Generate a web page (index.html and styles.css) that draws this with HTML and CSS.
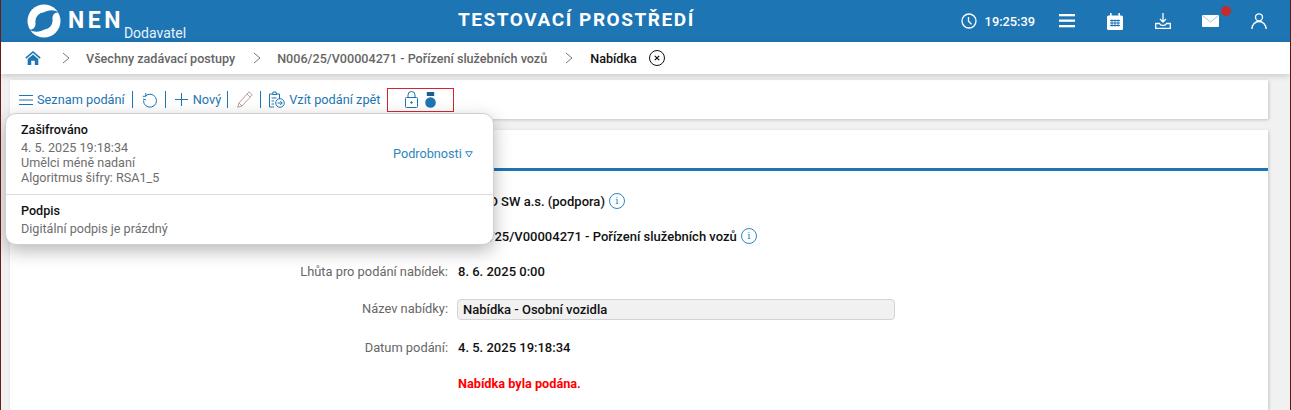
FILE: index.html
```html
<!DOCTYPE html>
<html lang="cs">
<head>
<meta charset="utf-8">
<title>NEN</title>
<link rel="stylesheet" href="styles.css">
</head>
<body>
<div class="frame">
  <header class="topbar">
    <div class="brand">
      <svg class="logo" width="34" height="34" viewBox="0 0 34 34"><circle cx="17" cy="17" r="16.500" fill="#fff"/><circle cx="17" cy="17" r="8.500" fill="#1d75b3"/><path fill="#1d75b3" d="M16 9C21 6 26 5 32 8.500 27 8 25 11 25.500 17Z"/><path fill="#1d75b3" d="M18 25C13 28 8 29 2 25.500 7 26 9 23 8.500 17Z"/></svg>
      <span class="brand-name">NEN</span>
      <span class="brand-role">Dodavatel</span>
    </div>
    <div class="env-title">TESTOVACÍ PROSTŘEDÍ</div>
    <div class="top-tools">
      <span class="clock">
        <svg width="16" height="16" viewBox="0 0 16 16" fill="none" stroke="#fff" stroke-width="1.300"><circle cx="8" cy="8" r="7"/><path d="M7.500 4v4.200l3 3"/></svg>
        <span>19:25:39</span>
      </span>
      <svg class="tool tool-menu" width="16" height="14" viewBox="0 0 16 14" fill="#fff"><rect y="0" width="16" height="2.300"/><rect y="5.500" width="16" height="2.300"/><rect y="11" width="16" height="2.300"/></svg>
      <svg class="tool tool-cal" width="16" height="17" viewBox="0 0 16 17"><rect y="2.500" width="16" height="14.500" rx="1.500" fill="#fff"/><rect x="3" y="0" width="1.600" height="4" fill="#fff"/><rect x="11.400" y="0" width="1.600" height="4" fill="#fff"/><path d="M3 7.500h10M3 10h10M3 12.500h10M5 6.500v7M8 6.500v7M11 6.500v7" stroke="#1d75b3" fill="none"/></svg>
      <svg class="tool tool-dl" width="16" height="16" viewBox="0 0 16 16" fill="none" stroke="#fff" stroke-width="1.300"><path d="M8 0v8.500M5 6l3 3 3-3M.7 10.500h3.800c.5 1.500 1.500 2 3.500 2s3-.5 3.500-2h3.800v4.800H.7Z"/></svg>
      <span class="mail">
        <svg width="17" height="12" viewBox="0 0 17 12"><rect width="17" height="12" rx="1" fill="#fff"/><path d="M.5.500 8.500 7l8-6.500" stroke="#9cc4df" fill="none"/></svg>
        <i class="dot"></i>
      </span>
      <svg class="tool tool-user" width="16" height="16" viewBox="0 0 16 16" fill="none" stroke="#fff" stroke-width="1.300"><circle cx="8" cy="4.300" r="3.500"/><path d="M.8 16c.2-4 3-7.500 7.200-7.500s7 3.500 7.200 7.500"/></svg>
    </div>
  </header>

  <nav class="crumbs">
    <svg class="home" width="16" height="16" viewBox="0 0 18 16"><path fill="#1d75b3" d="M9 0 .3 7.500l1.200 1.300L9 2.400l7.500 6.400 1.200-1.300Z"/><path fill="#1d75b3" d="M9 4 3 9v7h4v-5h4v5h4V9Z"/></svg>
    <svg class="chev" width="8" height="12" viewBox="0 0 8 12" fill="none" stroke="#777"><path d="m1 1 6 5-6 5"/></svg>
    <span class="crumb">Všechny zadávací postupy</span>
    <svg class="chev" width="8" height="12" viewBox="0 0 8 12" fill="none" stroke="#777"><path d="m1 1 6 5-6 5"/></svg>
    <span class="crumb">N006/25/V00004271 - Pořízení služebních vozů</span>
    <svg class="chev" width="8" height="12" viewBox="0 0 8 12" fill="none" stroke="#777"><path d="m1 1 6 5-6 5"/></svg>
    <span class="crumb crumb-current">Nabídka</span>
    <svg class="close" width="16" height="16" viewBox="0 0 16 16" fill="none" stroke="#111"><circle cx="8" cy="8" r="7.500"/><path d="m5.800 5.800 4.400 4.400m0-4.400-4.400 4.400" stroke-width="1.200"/></svg>
  </nav>

  <main class="content">
    <section class="toolbar">
      <button class="tb-item">
        <svg width="14" height="10" viewBox="0 0 14 10" stroke="#1d75b3" fill="none"><path d="M0 .5h14M0 5h14M0 9.500h14"/></svg>
        <span>Seznam podání</span>
      </button>
      <i class="sep"></i>
      <button class="tb-item">
        <svg width="16" height="16" viewBox="0 0 16 16" stroke="#1d75b3" fill="none"><path d="M3.500 4A6.500 6.500 0 1 1 1.500 8.500"/><path d="M3.800 1v3.300H.8M1 7l3 1"/></svg>
      </button>
      <i class="sep"></i>
      <button class="tb-item tb-new">
        <svg width="13" height="13" viewBox="0 0 13 13" stroke="#1d75b3" fill="none"><path d="M6.500 0v13M0 6.500h13"/></svg>
        <span>Nový</span>
      </button>
      <i class="sep"></i>
      <button class="tb-item">
        <svg width="16" height="17" viewBox="0 0 16 17" stroke="#b9a196" fill="none"><path d="m12 .8 3.200 3.200L5 15l-4.300 1.300L2 12ZM10 3l3.200 3.200M2 12l3 3"/></svg>
      </button>
      <i class="sep"></i>
      <button class="tb-item tb-back">
        <svg width="17" height="17" viewBox="0 0 17 17" stroke="#1d75b3" fill="none"><path d="M6 16H1.500V3h3M8 3h3.500v5M4.500 3.500 5 1h3l.5 2.500ZM3.500 7h5M3.500 10H6M3.500 13H6"/><circle cx="12" cy="12" r="4.300"/><path d="M9.500 12h4.500M12.300 10l2 2-2 2"/></svg>
        <span>Vzít podání zpět</span>
      </button>
      <div class="seal-box">
        <svg width="13" height="17" viewBox="0 0 13 17" stroke="#1d75b3" fill="none"><rect x=".5" y="6.500" width="12" height="10" rx="1"/><path d="M3 6.500V4a3.500 3.500 0 0 1 7 0v2.500"/><circle cx="6.500" cy="11.500" r=".8" fill="#1d75b3"/></svg>
        <svg width="11" height="16" viewBox="0 0 11 16" fill="#1d75b3"><rect x="1.800" width="7.400" height="4" fill="#1a5f8f"/><circle cx="5.500" cy="10.500" r="5.300"/></svg>
      </div>
    </section>

    <section class="card">
      <div class="card-tabs"></div>
      <div class="form">
        <div class="row row-a"><span class="label">Dodavatel:</span><span class="value">ELCOD SW a.s. (podpora)</span><i class="info">i</i></div>
        <div class="row row-b"><span class="label">Zadávací postup:</span><span class="value">N006/25/V00004271 - Pořízení služebních vozů</span><i class="info">i</i></div>
        <div class="row row-c"><span class="label">Lhůta pro podání nabídek:</span><span class="value">8. 6. 2025 0:00</span></div>
        <div class="row row-d"><span class="label">Název nabídky:</span><span class="field">Nabídka - Osobní vozidla</span></div>
        <div class="row row-e"><span class="label">Datum podání:</span><span class="value">4. 5. 2025 19:18:34</span></div>
        <div class="row row-f"><span class="label"></span><span class="value alert">Nabídka byla podána.</span></div>
      </div>
    </section>

    <aside class="popover">
      <div class="pop-sec pop-enc">
        <div class="pop-text">
          <div class="pop-title">Zašifrováno</div>
          <div>4. 5. 2025 19:18:34</div>
          <div>Umělci méně nadaní</div>
          <div>Algoritmus šifry: RSA1_5</div>
        </div>
        <a class="pop-link">Podrobnosti <svg width="8" height="7" viewBox="0 0 8 7" fill="none" stroke="#2e86c1"><path d="M.7.700h6.600L4 6Z"/></svg></a>
      </div>
      <div class="pop-sec pop-sign">
        <div class="pop-text">
          <div class="pop-title">Podpis</div>
          <div>Digitální podpis je prázdný</div>
        </div>
      </div>
    </aside>
  </main>
</div>
</body>
</html>
```

FILE: styles.css
```css
* { box-sizing: border-box; }
html, body { margin: 0; height: 100%; overflow: hidden; }
body { font-family: Roboto, "Liberation Sans", sans-serif; font-size: 13px; color: #111; background: #f1f1f1; }
.frame { height: 410px; border-left: 1px solid #6e1c14; border-right: 1px solid #5a1a18; display: flex; flex-direction: column; }

.topbar { height: 42px; flex: none; background: #1d75b3; color: #fff; display: flex; align-items: center; position: relative; }
.brand { display: flex; align-items: center; margin-left: 26px; width: 400px; }
.logo { flex: none; }
.brand-name { font-size: 23px; font-weight: 700; letter-spacing: 3.5px; margin-left: 7px; margin-top: -2px; }
.brand-role { font-size: 14px; margin-left: 0; margin-top: 23px; color: #e6f3fb; }
.env-title { position: absolute; left: 457px; top: 8px; font-size: 19px; font-weight: 700; letter-spacing: 1.55px; line-height: 24px; }
.top-tools { margin-left: auto; display: flex; align-items: center; padding-right: 23px; }
.clock { display: flex; align-items: center; gap: 8px; font-size: 12.8px; font-weight: 500; }
.tool-menu { margin-left: 24px; }
.tool-cal { margin-left: 32px; }
.tool-dl { margin-left: 32px; }
.mail { margin-left: 31px; position: relative; display: flex; }
.dot { position: absolute; left: 19px; top: -9px; width: 10px; height: 10px; border-radius: 50%; background: #c62a2a; }
.tool-user { margin-left: 32px; }

.crumbs { height: 32px; flex: none; background: #fff; display: flex; align-items: center; padding-left: 24px; box-shadow: 0 2px 6px rgba(0,0,0,.16); position: relative; z-index: 1; }
.chev { margin-left: 18px; flex: none; }
.home + .chev { margin-left: 21px; }
.crumb { font-weight: 500; color: #666; margin-left: 16px; font-size: 12.6px; }
.crumb-current { color: #111; margin-left: 17px; }
.close { margin-left: 12px; }

.content { flex: 1; position: relative; padding: 6px 22px 0 9px; display: flex; flex-direction: column; gap: 11px; min-height: 0; }
.toolbar { height: 39px; flex: none; background: #fff; box-shadow: 1px 1px 3px rgba(0,0,0,.18); display: flex; align-items: center; padding: 0 0 0 9px; }
.tb-item { display: flex; align-items: center; gap: 4px; padding: 0; border: 0; background: none; color: #1d75b3; font: inherit; font-size: 12.75px; }
.tb-new { gap: 5px; margin-right: -1px; }
.tb-back { margin-left: -2px; }
.sep { width: 1px; height: 17px; background: #1d75b3; margin: 0 9px 0 7px; flex: none; }
.seal-box { margin-left: 6px; width: 67px; height: 24px; border: 1px solid #d8242c; display: flex; align-items: center; justify-content: center; gap: 7px; }

.card { flex: 1; background: #fff; box-shadow: 1px 1px 3px rgba(0,0,0,.18); }
.card-tabs { height: 41px; border-bottom: 3px solid #1d75b3; }
.row { display: flex; align-items: center; height: 18px; position: absolute; left: 9px; }
.label { width: 438px; text-align: right; color: #666; font-size: 12.85px; }
.value { margin-left: 10px; font-weight: 500; color: #111; }
.alert { color: #f00; font-weight: 700; font-size: 12.7px; }
.field { margin-left: 9px; width: 438px; height: 21px; background: #f1f1f1; border: 1px solid #d4d4d4; border-radius: 4px; padding: 0 5px; font-weight: 500; line-height: 20px; color: #111; }
.info { margin-left: 4px; width: 16px; height: 16px; border: 1px solid #2e86c1; border-radius: 50%; color: #2e86c1; font: normal 10px/14px "DejaVu Serif", serif; text-align: center; }
.row-a { top: 118px; }
.row-b { top: 153px; }
.row-c { top: 188px; }
.row-d { top: 225px; height: 21px; }
.row-d .label { margin-top: -2px; }
.row-e { top: 264px; }
.row-f { top: 300px; }

.popover { position: absolute; left: 4px; top: 39px; width: 489px; height: 132px; background: #fff; border: 1px solid #cfcfcf; border-radius: 11px; box-shadow: 0 6px 18px rgba(0,0,0,.28); color: #6e6e6e; font-size: 12.6px; line-height: 15px; z-index: 2; }
.pop-sec { padding: 0 15px 2px; display: flex; justify-content: space-between; align-items: center; }
.pop-enc { height: 81px; border-bottom: 1px solid #dedede; }
.pop-sign { height: 49px; }
.pop-title { color: #111; font-weight: 500; line-height: 17px; margin-bottom: 2px; }
.pop-link { color: #2e86c1; font-size: 12.7px; margin-right: 5px; margin-bottom: -1px; }
```
